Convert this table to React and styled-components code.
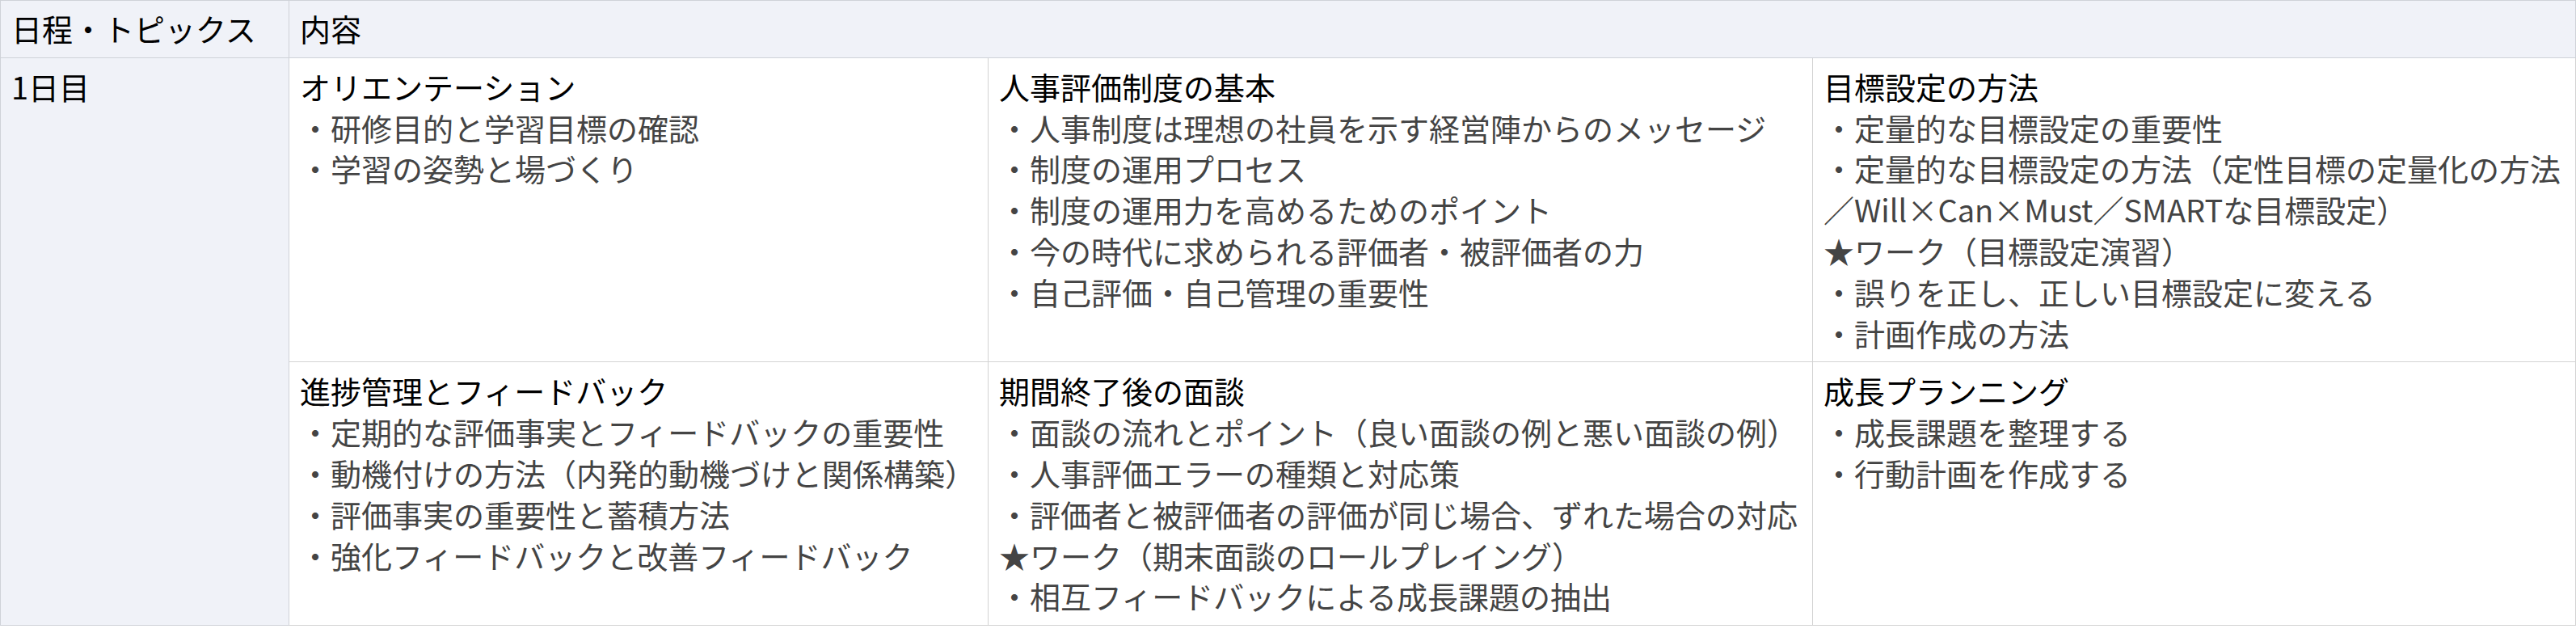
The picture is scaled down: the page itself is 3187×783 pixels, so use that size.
import React from 'react';
import styled, { createGlobalStyle } from 'styled-components';

const GlobalStyle = createGlobalStyle`
  html, body {
    margin: 0;
    padding: 0;
    background: #ffffff;
  }
  body {
    font-family: "Noto Sans CJK JP", "Noto Sans", sans-serif;
  }
`;

const Table = styled.table`
  width: 3186px;
  table-layout: fixed;
  border-collapse: collapse;
  font-size: 38px;
  line-height: 50.8px;
  color: #000;
`;

const Col = styled.col`
  width: ${(p) => p.$w}px;
`;

const HeadCell = styled.th`
  background: #f0f2f8;
  border: 1px solid #cfd2d8;
  padding: 9px 13px 10px;
  text-align: left;
  font-weight: 400;
  color: #000;
  vertical-align: middle;
`;

const DayCell = styled.td`
  background: #f0f2f8;
  border: 1px solid #cfd2d8;
  padding: 10px 13px;
  vertical-align: top;
  color: #000;
`;

const Cell = styled.td`
  background: #fff;
  border: 1px solid #d3d3d3;
  padding: 10px 13px;
  vertical-align: top;
`;

const Title = styled.div`
  color: #000;
`;

const Item = styled.div`
  color: #444;
`;

const widths = [357, 865, 1020, 944];

const sessions = [
  [
    {
      title: 'オリエンテーション',
      items: ['・研修目的と学習目標の確認', '・学習の姿勢と場づくり'],
    },
    {
      title: '人事評価制度の基本',
      items: [
        '・人事制度は理想の社員を示す経営陣からのメッセージ',
        '・制度の運用プロセス',
        '・制度の運用力を高めるためのポイント',
        '・今の時代に求められる評価者・被評価者の力',
        '・自己評価・自己管理の重要性',
      ],
    },
    {
      title: '目標設定の方法',
      items: [
        '・定量的な目標設定の重要性',
        '・定量的な目標設定の方法（定性目標の定量化の方法／Will×Can×Must／SMARTな目標設定）',
        '★ワーク（目標設定演習）',
        '・誤りを正し、正しい目標設定に変える',
        '・計画作成の方法',
      ],
    },
  ],
  [
    {
      title: '進捗管理とフィードバック',
      items: [
        '・定期的な評価事実とフィードバックの重要性',
        '・動機付けの方法（内発的動機づけと関係構築）',
        '・評価事実の重要性と蓄積方法',
        '・強化フィードバックと改善フィードバック',
      ],
    },
    {
      title: '期間終了後の面談',
      items: [
        '・面談の流れとポイント（良い面談の例と悪い面談の例）',
        '・人事評価エラーの種類と対応策',
        '・評価者と被評価者の評価が同じ場合、ずれた場合の対応',
        '★ワーク（期末面談のロールプレイング）',
        '・相互フィードバックによる成長課題の抽出',
      ],
    },
    {
      title: '成長プランニング',
      items: ['・成長課題を整理する', '・行動計画を作成する'],
    },
  ],
];

const Topic = ({ title, items }) => (
  <Cell>
    <Title>{title}</Title>
    {items.map((t) => (
      <Item key={t}>{t}</Item>
    ))}
  </Cell>
);

export default function App() {
  return (
    <>
      <GlobalStyle />
      <Table>
        <colgroup>
          {widths.map((w, i) => (
            <Col key={i} $w={w} />
          ))}
        </colgroup>
        <thead>
          <tr>
            <HeadCell>日程・トピックス</HeadCell>
            <HeadCell colSpan={3}>内容</HeadCell>
          </tr>
        </thead>
        <tbody>
          {sessions.map((row, i) => (
            <tr key={i}>
              {i === 0 && <DayCell rowSpan={2}>1日目</DayCell>}
              {row.map((s) => (
                <Topic key={s.title} {...s} />
              ))}
            </tr>
          ))}
        </tbody>
      </Table>
    </>
  );
}
